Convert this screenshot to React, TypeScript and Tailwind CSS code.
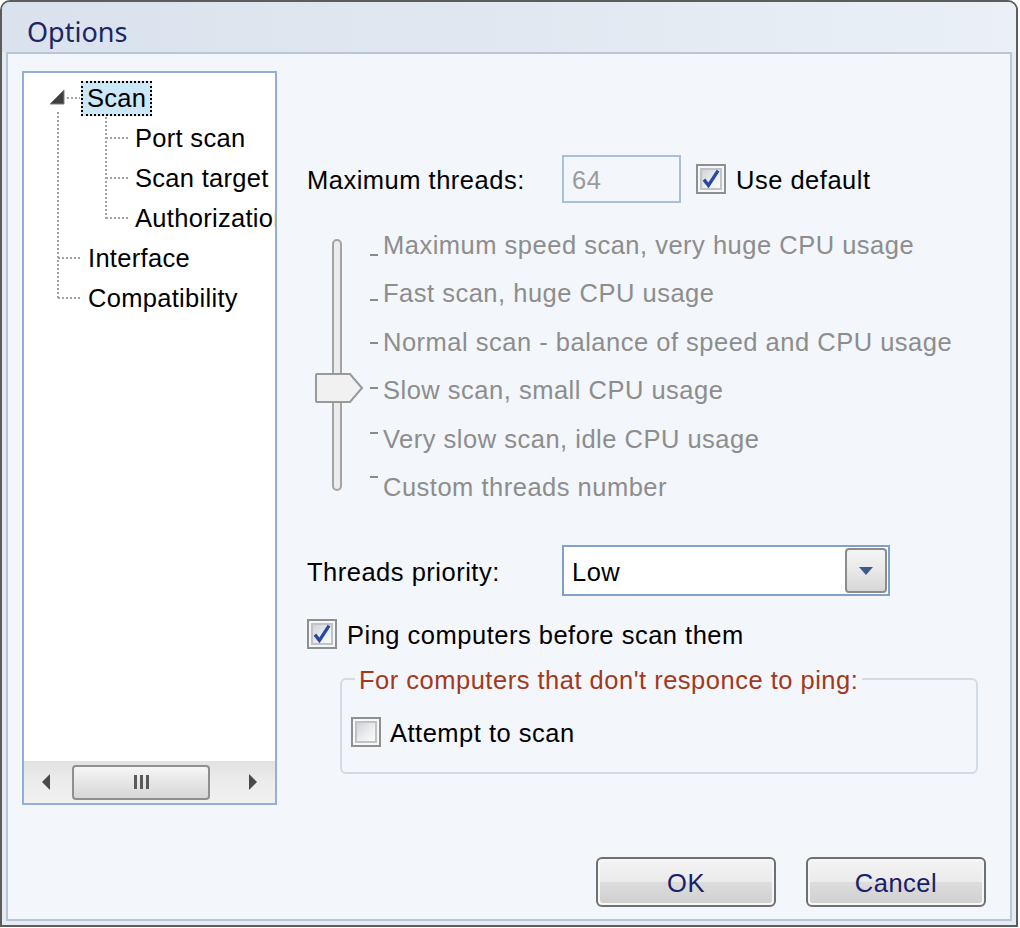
import React from "react";

const body = { fontFamily: '"Liberation Sans", Arial, sans-serif' };

function CheckBox({ checked }: { checked?: boolean }) {
  return (
    <div className="w-[30px] h-[30px] shrink-0 border-2 border-[#8e8f8f] bg-[#f7f7f7] p-[2px]">
      <div className="w-full h-full border-2 border-[#bfc3c8] bg-gradient-to-br from-[#cfd3d8] via-[#e9ebed] to-[#fbfbfb]">
        {checked && (
          <svg className="w-full h-full overflow-visible" viewBox="0 0 14 14">
            <path d="M1.5 7.5 L5 12 L12.5 0.5" stroke="#2b47a4" strokeWidth="2.6" fill="none" strokeLinejoin="miter" />
          </svg>
        )}
      </div>
    </div>
  );
}

function Button({ label }: { label: string }) {
  return (
    <div className="w-[180px] h-[50px] rounded-[6px] border-2 border-[#707070] p-[2px] bg-[#f6f6f6]">
      <div className="w-full h-full rounded-[3px] flex flex-col overflow-hidden relative">
        <div className="h-1/2 bg-gradient-to-b from-[#f3f3f3] to-[#ebebeb]" />
        <div className="h-1/2 bg-gradient-to-b from-[#dddddd] to-[#d0d0d0]" />
        <div className="absolute inset-0 pt-[4px] flex items-center justify-center text-[25.5px] leading-none text-[#17206a]">
          {label}
        </div>
      </div>
    </div>
  );
}

const sliderLabels = [
  "Maximum speed scan, very huge CPU usage",
  "Fast scan, huge CPU usage",
  "Normal scan - balance of speed and CPU usage",
  "Slow scan, small CPU usage",
  "Very slow scan, idle CPU usage",
  "Custom threads number",
];

const tickYs = [34, 79, 122, 167, 212, 256];

export default function App() {
  return (
    <div className="w-[1020px] h-[928px] bg-white" style={body}>
      <div className="w-[1018px] h-[927px] border-2 border-[#5c5c5c] rounded-t-[10px] bg-[#e5ebf3] flex flex-col overflow-hidden">
        {/* Title bar */}
        <div className="h-[50px] shrink-0 flex items-center pl-[25px] pt-[8px] bg-gradient-to-r from-[#d9e2ed] via-[#e1e8f1] to-[#eaf0f6]">
          <span
            className="text-[27px] leading-none text-[#1d2565]"
            style={{ fontFamily: '"Noto Sans", "Open Sans", sans-serif' }}
          >
            Options
          </span>
        </div>

        {/* Client area */}
        <div className="flex-1 mx-[4px] mb-[4px] border-2 border-[#b8c6d8] bg-[#f3f6fb] flex flex-col text-[25.5px] leading-none tracking-[0.5px] text-black">
          <div className="flex flex-1 pl-[14px] pt-[17px]">
            {/* Tree panel */}
            <div className="w-[255px] h-[734px] shrink-0 border-2 border-[#94aeda] bg-white flex flex-col overflow-hidden tracking-[0.3px]">
              <div className="relative flex-1 pt-[5px] whitespace-nowrap">
                <svg className="absolute left-0 top-[1px]" width="251" height="260">
                  <g stroke="#a3a3a3" strokeWidth="2" strokeDasharray="2 2" fill="none">
                    <line x1="43" y1="24" x2="56" y2="24" />
                    <line x1="34" y1="38" x2="34" y2="225" />
                    <line x1="34" y1="184" x2="58" y2="184" />
                    <line x1="34" y1="224" x2="58" y2="224" />
                    <line x1="82" y1="43" x2="82" y2="145" />
                    <line x1="82" y1="64" x2="106" y2="64" />
                    <line x1="82" y1="104" x2="106" y2="104" />
                    <line x1="82" y1="144" x2="106" y2="144" />
                  </g>
                  <path d="M26 30 L40 30 L40 16 Z" fill="#3f3f3f" stroke="#7a7a7a" strokeWidth="1" />
                </svg>
                <div className="h-[40px] flex items-center">
                  <div className="ml-[57px] h-[35px] px-[4px] pt-[2px] flex items-center border-2 border-dotted border-black bg-[#cce8f7]">
                    Scan
                  </div>
                </div>
                <div className="h-[40px] flex items-center pt-[2px] pl-[111px]">Port scan</div>
                <div className="h-[40px] flex items-center pt-[2px] pl-[111px]">Scan target</div>
                <div className="h-[40px] flex items-center pt-[2px] pl-[111px]">Authorization</div>
                <div className="h-[40px] flex items-center pt-[2px] pl-[64px]">Interface</div>
                <div className="h-[40px] flex items-center pt-[2px] pl-[64px]">Compatibility</div>
              </div>
              {/* Horizontal scrollbar */}
              <div className="h-[42px] shrink-0 flex items-center bg-gradient-to-b from-[#e2e2e2] via-[#ececec] to-[#f1f1f1]">
                <div className="w-[44px] flex justify-center">
                  <svg width="12" height="18" viewBox="0 0 12 18">
                    <path d="M10 1 L2 9 L10 17 Z" fill="#4a4a4a" />
                  </svg>
                </div>
                <div className="ml-[4px] w-[138px] h-[35px] rounded-[4px] border-2 border-[#8f8f8f] bg-gradient-to-b from-[#f6f6f6] via-[#e6e6e6] to-[#d6d6d6] flex items-center justify-center gap-[3px]">
                  <div className="w-[3px] h-[14px] bg-[#5a5a5a]" />
                  <div className="w-[3px] h-[14px] bg-[#5a5a5a]" />
                  <div className="w-[3px] h-[14px] bg-[#5a5a5a]" />
                </div>
                <div className="ml-auto w-[44px] flex justify-center">
                  <svg width="12" height="18" viewBox="0 0 12 18">
                    <path d="M2 1 L10 9 L2 17 Z" fill="#4a4a4a" />
                  </svg>
                </div>
              </div>
            </div>

            {/* Right column */}
            <div className="ml-[30px] pt-[84px] flex flex-col">
              {/* Maximum threads */}
              <div className="h-[48px] flex items-center">
                <div className="w-[255px] pt-[4px]">Maximum threads:</div>
                <div className="w-[119px] h-[48px] border-2 border-[#a9bfdb] flex items-center pl-[8px] pt-[4px] text-[#9b9b9b]">
                  64
                </div>
                <div className="ml-[15px]">
                  <CheckBox checked />
                </div>
                <div className="ml-[10px] pt-[4px]">Use default</div>
              </div>

              {/* Slider */}
              <div className="relative h-[291px] mt-[17px]">
                <div className="absolute left-[25px] top-[19px] w-[10px] h-[252px] rounded-[5px] border-2 border-[#a3a3a3] bg-[#ececec]" />
                {tickYs.map((y) => (
                  <div
                    key={y}
                    className="absolute left-[63px] w-[8px] h-[2px] bg-[#8a8a8a]"
                    style={{ top: y }}
                  />
                ))}
                <svg className="absolute left-[8px] top-[153px]" width="50" height="30" viewBox="0 0 50 30">
                  <path d="M1 2 Q1 1 2 1 H35 L47 15 L35 29 H2 Q1 29 1 28 Z" fill="#f1f1f1" stroke="#999999" strokeWidth="2" />
                </svg>
                <div className="flex flex-col pl-[76px] pt-[1px] text-[#8d8d8d] whitespace-nowrap">
                  {sliderLabels.map((l) => (
                    <div key={l} className="h-[48.5px] flex items-center">
                      {l}
                    </div>
                  ))}
                </div>
              </div>

              {/* Threads priority */}
              <div className="h-[51px] mt-[34px] flex items-center">
                <div className="w-[255px] pt-[4px]">Threads priority:</div>
                <div className="w-[328px] h-[51px] border-2 border-[#7fa2cb] bg-white flex items-center pl-[8px] pr-[1px]">
                  <span className="pt-[4px]">Low</span>
                  <div className="ml-auto w-[42px] h-[45px] rounded-[4px] border-2 border-[#8c8c8c] bg-gradient-to-b from-[#f5f5f5] via-[#e8e8e8] to-[#d6d6d6] flex items-center justify-center">
                    <svg width="14" height="8" viewBox="0 0 14 8">
                      <path d="M0 0 H14 L7 8 Z" fill="#3a5a8c" />
                    </svg>
                  </div>
                </div>
              </div>

              {/* Ping */}
              <div className="h-[30px] mt-[23px] flex items-center">
                <CheckBox checked />
                <div className="ml-[10px] pt-[4px]">Ping computers before scan them</div>
              </div>

              {/* Group box */}
              <fieldset className="mt-[15px] ml-[33px] w-[638px] border-2 border-[#d3dce6] rounded-[6px] pl-[9px] pb-[25px]">
                <legend className="ml-[4px] px-[4px] h-[30px] pt-[4px] flex items-center text-[#a3381c]">
                  For computers that don&apos;t responce to ping:
                </legend>
                <div className="mt-[23px] flex items-center">
                  <CheckBox />
                  <div className="ml-[9px] pt-[4px]">Attempt to scan</div>
                </div>
              </fieldset>
            </div>
          </div>

          {/* Buttons */}
          <div className="flex justify-end gap-[30px] pr-[24px] pb-[12px]">
            <Button label="OK" />
            <Button label="Cancel" />
          </div>
        </div>
      </div>
    </div>
  );
}
